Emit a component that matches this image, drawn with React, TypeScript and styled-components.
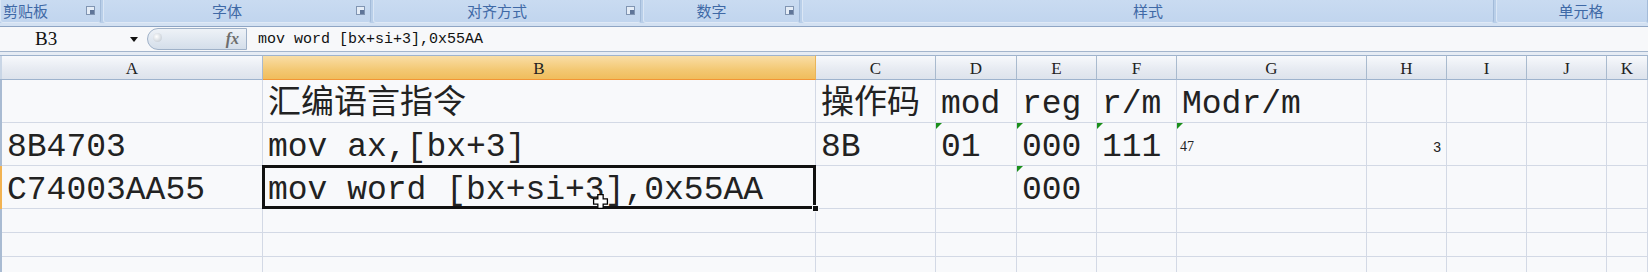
import React from "react";
import styled, { createGlobalStyle, css } from "styled-components";

const GlobalStyle = createGlobalStyle`
  body {
    margin: 0;
    background: #f8f9fb;
    overflow: hidden;
  }
  * { box-sizing: border-box; }
`;

const Page = styled.div`
  width: 1648px;
  height: 272px;
  overflow: hidden;
  background: #f8f9fb;
`;

/* ribbon group captions */
const Ribbon = styled.div`
  display: flex;
  gap: 2px;
  height: 23px;
  background: #b9cfe9;
`;

const Group = styled.div<{ $w?: number }>`
  display: flex;
  align-items: center;
  ${(p) => (p.$w ? css`width: ${p.$w}px;` : css`flex: 1;`)}
  height: 23px;
  background: linear-gradient(#c9dbf1, #c1d5ee);
  border-right: 1px solid #a3bbd9;
  border-left: 1px solid #dae6f5;
  border-bottom: 1px solid #dfe9f6;
  border-radius: 0 0 3px 3px;
`;

const GroupLabel = styled.div<{ $left?: boolean; $pad?: number }>`
  flex: 1;
  text-align: ${(p) => (p.$left ? "left" : "center")};
  padding-left: ${(p) => p.$pad || 0}px;
  font-family: "Noto Sans CJK SC", sans-serif;
  font-size: 15px;
  line-height: 22px;
  color: #3f69a6;
`;

const Launcher = styled.div`
  width: 20px;
  display: flex;
  justify-content: center;
  align-items: center;
  padding-bottom: 2px;
`;

const Band = styled.div`
  height: 4px;
  background: #d3e1f2;
  border-bottom: 1px solid #8ea5c4;
`;

/* formula bar */
const FormulaBar = styled.div`
  display: flex;
  align-items: stretch;
  height: 25px;
  background: #f7f8fa;
  border-bottom: 1px solid #a3b5cc;
`;

const NameBox = styled.div`
  width: 147px;
  display: flex;
  align-items: center;
  padding-left: 35px;
  font-family: "Liberation Serif", serif;
  font-size: 19px;
  color: #111;
`;

const NameText = styled.span`
  flex: 1;
`;

const Arrow = styled.span`
  width: 0;
  height: 0;
  margin-right: 9px;
  border-left: 4px solid transparent;
  border-right: 4px solid transparent;
  border-top: 5px solid #111;
`;

const Pill = styled.div`
  width: 100px;
  margin: 1px 0;
  display: flex;
  align-items: center;
  justify-content: space-between;
  padding: 0 7px 0 5px;
  border: 1px solid #9fb1c8;
  border-radius: 12px 0 0 12px;
  background: linear-gradient(#eef2f7, #d4deea);
`;

const Dot = styled.span`
  width: 9px;
  height: 9px;
  border-radius: 50%;
  background: radial-gradient(circle at 40% 40%, #fff, #b9c2cc);
  margin-bottom: 4px;
`;

const Fx = styled.span`
  font-family: "Liberation Serif", serif;
  font-style: italic;
  font-weight: bold;
  font-size: 16px;
  color: #6d6d6d;
`;

const Formula = styled.div`
  flex: 1;
  display: flex;
  align-items: center;
  padding-left: 11px;
  font-family: "Liberation Mono", "Noto Sans CJK SC", monospace;
  font-size: 15px;
  color: #111;
`;

const Gap = styled.div`
  height: 3px;
  background: #e6ecf4;
`;

/* sheet */
const Sheet = styled.div`
  display: grid;
  grid-template-columns: 2px 261px 553px 120px 81px 80px 80px 190px 80px 80px 80px 1fr;
  grid-template-rows: 25px 43px 43px 43px 24px 24px 24px;
`;

const Corner = styled.div`
  background: #c9d6e6;
  border-top: 1px solid #9eb3cd;
  border-bottom: 1px solid #9eb3cd;
`;

const ColHead = styled.div<{ $active?: boolean }>`
  display: flex;
  align-items: center;
  justify-content: center;
  padding-top: 2px;
  font-family: "Liberation Serif", serif;
  font-size: 17px;
  color: #222;
  border-top: 1px solid #9eb3cd;
  border-right: 1px solid #a9bace;
  border-bottom: 1px solid #9eb3cd;
  background: linear-gradient(#f7f9fc, #e7ebf2 55%, #dde3ec);
  ${(p) =>
    p.$active &&
    css`
      background: linear-gradient(#f9dea6, #f3c873 60%, #f0bd5c);
      border-right-color: #e9b55a;
      border-bottom-color: #f29536;
    `}
`;

const RowStub = styled.div<{ $active?: boolean }>`
  background: ${(p) => (p.$active ? "#f2b352" : "#a9bbd2")};
  border-bottom: 1px solid ${(p) => (p.$active ? "#f2b352" : "#a9bbd2")};
`;

const Cell = styled.div<{
  $right?: boolean;
  $small?: boolean;
  $mark?: boolean;
  $selected?: boolean;
}>`
  position: relative;
  display: flex;
  align-items: flex-end;
  justify-content: ${(p) => (p.$right ? "flex-end" : "flex-start")};
  padding: 0 5px 1px 5px;
  border-right: 1px solid #d3d9e5;
  border-bottom: 1px solid #d3d9e5;
  background: #f8f9fb;
  white-space: nowrap;
  font-family: "Liberation Mono", "Noto Sans CJK SC", monospace;
  font-size: 33px;
  line-height: 33px;
  color: #222;
  ${(p) =>
    p.$small &&
    css`
      font-family: ${p.$right ? '"Liberation Sans"' : '"Liberation Serif"'}, serif;
      font-size: 14px;
      line-height: 14px;
      padding-bottom: 11px;
      padding-left: 3px;
      color: #222;
    `}
  ${(p) =>
    p.$mark &&
    css`
      &::before {
        content: "";
        position: absolute;
        top: 0;
        left: 0;
        border-top: 6px solid #1b8f1b;
        border-right: 6px solid transparent;
      }
    `}
  ${(p) =>
    p.$selected &&
    css`
      z-index: 2;
      &::after {
        content: "";
        position: absolute;
        top: -1px;
        left: -1px;
        right: -1px;
        bottom: -1px;
        border: 3px solid #111;
      }
    `}
`;

const Handle = styled.span`
  position: absolute;
  right: -4px;
  bottom: -4px;
  width: 7px;
  height: 7px;
  background: #111;
  border: 1px solid #f8f9fb;
  z-index: 3;
`;

const Pointer = styled.svg`
  position: absolute;
  left: 329px;
  top: 27px;
  z-index: 4;
`;

const LauncherIcon = () => (
  <svg width="9" height="9" viewBox="0 0 9 9">
    <rect x="0.5" y="0.5" width="8" height="8" fill="#e4ecf6" stroke="#8195b2" />
    <rect x="4" y="4" width="4" height="4" fill="#5f7598" />
  </svg>
);

type CellData = {
  v?: string;
  right?: boolean;
  small?: boolean;
  mark?: boolean;
  selected?: boolean;
};

const cols = ["A", "B", "C", "D", "E", "F", "G", "H", "I", "J", "K"];

const rows: CellData[][] = [
  [{}, { v: "汇编语言指令" }, { v: "操作码" }, { v: "mod" }, { v: "reg" }, { v: "r/m" }, { v: "Modr/m" }, {}, {}, {}, {}],
  [
    { v: "8B4703" },
    { v: "mov ax,[bx+3]" },
    { v: "8B" },
    { v: "01", mark: true },
    { v: "000", mark: true },
    { v: "111", mark: true },
    { v: "47", small: true, mark: true },
    { v: "3", small: true, right: true },
    {},
    {},
    {},
  ],
  [
    { v: "C74003AA55" },
    { v: "mov word [bx+si+3],0x55AA", selected: true },
    {},
    {},
    { v: "000", mark: true },
    {},
    {},
    {},
    {},
    {},
    {},
  ],
  [{}, {}, {}, {}, {}, {}, {}, {}, {}, {}, {}],
  [{}, {}, {}, {}, {}, {}, {}, {}, {}, {}, {}],
  [{}, {}, {}, {}, {}, {}, {}, {}, {}, {}, {}],
];

const groups = [
  { label: "剪贴板", w: 101, left: true, launcher: true },
  { label: "字体", w: 268, launcher: true },
  { label: "对齐方式", w: 268, launcher: true },
  { label: "数字", w: 157, launcher: true },
  { label: "样式", w: 692 },
  { label: "单元格", pad: 18 },
];

export default function App() {
  return (
    <Page>
      <GlobalStyle />
      <Ribbon>
        {groups.map((g) => (
          <Group key={g.label} $w={g.w}>
            <GroupLabel $left={g.left} $pad={g.left ? 2 : g.pad}>
              {g.label}
            </GroupLabel>
            {g.launcher && (
              <Launcher>
                <LauncherIcon />
              </Launcher>
            )}
          </Group>
        ))}
      </Ribbon>
      <Band />
      <FormulaBar>
        <NameBox>
          <NameText>B3</NameText>
          <Arrow />
        </NameBox>
        <Pill>
          <Dot />
          <Fx>fx</Fx>
        </Pill>
        <Formula>mov word [bx+si+3],0x55AA</Formula>
      </FormulaBar>
      <Gap />
      <Sheet>
        <Corner />
        {cols.map((c) => (
          <ColHead key={c} $active={c === "B"}>
            {c}
          </ColHead>
        ))}
        {rows.map((r, ri) => (
          <React.Fragment key={ri}>
            <RowStub $active={ri === 2} />
            {r.map((c, ci) => (
              <Cell
                key={ci}
                $right={c.right}
                $small={c.small}
                $mark={c.mark}
                $selected={c.selected}
              >
                {c.v}
                {c.selected && (
                  <>
                    <Handle />
                    <Pointer width="17" height="17" viewBox="0 0 16 16">
                      <path
                        d="M5.5 1.5h5v4h4v5h-4v4h-5v-4h-4v-5h4z"
                        fill="#fff"
                        stroke="#000"
                        strokeWidth="1.2"
                      />
                    </Pointer>
                  </>
                )}
              </Cell>
            ))}
          </React.Fragment>
        ))}
      </Sheet>
    </Page>
  );
}
